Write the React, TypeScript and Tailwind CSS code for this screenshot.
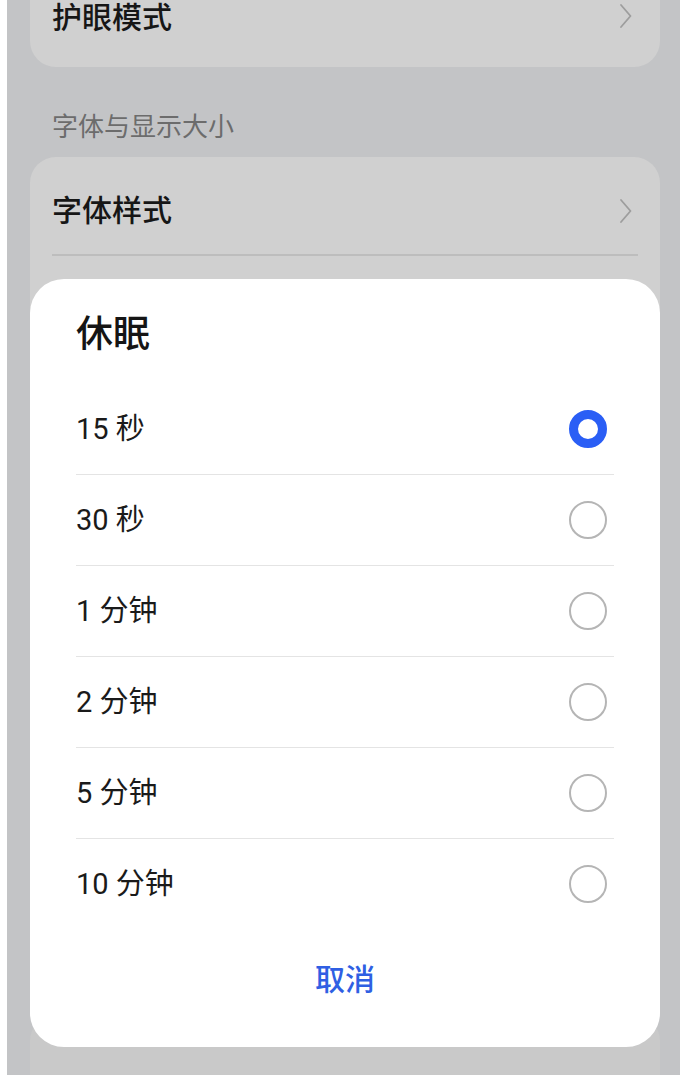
import React from 'react';

const options = ['15 秒', '30 秒', '1 分钟', '2 分钟', '5 分钟', '10 分钟'];

function Chevron() {
  return (
    <svg width="14" height="26" viewBox="0 0 14 26" fill="none">
      <path d="M2 2 L11.5 13 L2 24" stroke="#9d9d9d" strokeWidth="1.8" strokeLinecap="round" strokeLinejoin="round" />
    </svg>
  );
}

function Radio({ checked }: { checked: boolean }) {
  if (checked) {
    return <div className="w-[38px] h-[38px] rounded-full border-[9.5px] border-[#2a5ef5] bg-white" />;
  }
  return <div className="w-[38px] h-[38px] rounded-full border-[2px] border-[#b5b5b5] bg-white" />;
}

export default function App() {
  return (
    <div className="relative w-[686px] h-[1081px] bg-white overflow-hidden font-['Roboto','Noto_Sans_CJK_SC',sans-serif]">
      {/* dimmed settings page */}
      <div className="ml-[7px] w-[673px] h-[1075px] bg-[#c3c4c6] pl-[23px] pr-[20px] flex flex-col">
        <div className="w-[630px] h-[67px] bg-[#d0d0d0] rounded-b-[26px] flex items-start justify-between pl-[22px] pr-[27px]">
          <div className="h-[34px] pt-[2px] flex items-center text-[30px] leading-[30px] font-medium text-[#161616]">护眼模式</div>
          <div className="h-[32px] flex items-center"><Chevron /></div>
        </div>

        <div className="mt-[47px] pl-[22px] text-[26px] leading-[26px] text-[#6c6c6c]">字体与显示大小</div>

        <div className="mt-[17px] w-[630px] h-[830px] bg-[#d0d0d0] rounded-[26px] flex flex-col">
          <div className="h-[97px] pt-[11px] flex items-center justify-between pl-[22px] pr-[27px]">
            <span className="text-[30px] leading-[32px] font-medium text-[#161616]">字体样式</span>
            <Chevron />
          </div>
          <div className="mx-[22px] h-[2px] bg-[#bdbdbd]" />
        </div>

        <div className="mt-[28px] w-[630px] flex-1 bg-[#c9c9c9] rounded-t-[26px]" />
      </div>

      {/* sleep dialog */}
      <div className="absolute left-[30px] top-[279px] w-[630px] bg-white rounded-[34px] flex flex-col pl-[46px] pr-[46px]">
        <div className="h-[105px] pt-[37px] text-[37px] leading-[37px] font-medium text-[#151515]">休眠</div>
        {options.map((label, i) => (
          <div
            key={label}
            className={
              i < options.length - 1
                ? 'h-[91px] flex items-center justify-between border-b border-[#e4e4e4] pr-[7px]'
                : 'h-[90px] flex items-center justify-between pr-[7px]'
            }
          >
            <span className="text-[29px] leading-[30px] text-[#1a1a1a]">{label}</span>
            <Radio checked={i === 0} />
          </div>
        ))}
        <div className="pt-[36px] pb-[52px] flex justify-center">
          <span className="text-[30px] leading-[30px] font-medium text-[#2f5fe3]">取消</span>
        </div>
      </div>
    </div>
  );
}
